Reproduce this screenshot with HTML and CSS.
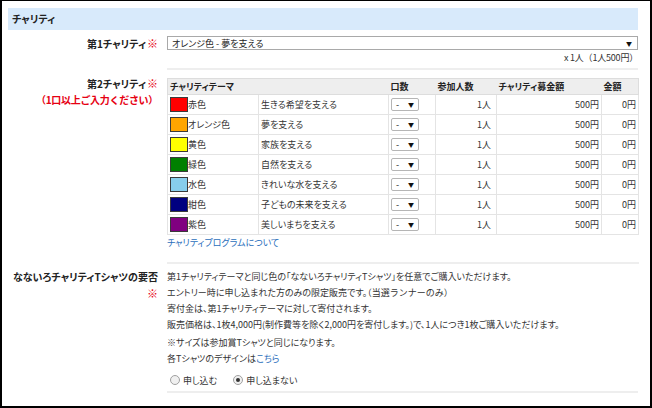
FILE: index.html
```html
<!DOCTYPE html>
<html lang="ja">
<head>
<meta charset="utf-8">
<title>チャリティ</title>
<link rel="stylesheet" href="styles.css">
</head>
<body>
<div class="frame">
  <div class="section-head">チャリティ</div>

  <div class="form-row">
    <div class="label">第1チャリティ<span class="req">※</span></div>
    <div class="field field-first">
      <div class="select select-wide"><span>オレンジ色 - 夢を支える</span><span class="arrow">▼</span></div>
      <div class="note-right">x 1人（1人500円）</div>
    </div>
  </div>

  <div class="form-row">
    <div class="label">第2チャリティ<span class="req">※</span><br><span class="warn">（1口以上ご入力ください）</span></div>
    <div class="field field-second">
      <table class="charity">
        <colgroup>
          <col class="c-name"><col class="c-theme"><col class="c-qty"><col class="c-people"><col class="c-fund"><col class="c-total">
        </colgroup>
        <thead>
          <tr><th colspan="2">チャリティテーマ</th><th>口数</th><th>参加人数</th><th>チャリティ募金額</th><th>金額</th></tr>
        </thead>
        <tbody>
          <tr><td><div class="color"><span class="swatch sw-red"></span>赤色</div></td><td>生きる希望を支える</td><td><div class="select select-mini"><span>-</span><span class="arrow">▼</span></div></td><td class="num num-people">1人</td><td class="num">500円</td><td class="num">0円</td></tr>
          <tr><td><div class="color"><span class="swatch sw-orange"></span>オレンジ色</div></td><td>夢を支える</td><td><div class="select select-mini"><span>-</span><span class="arrow">▼</span></div></td><td class="num num-people">1人</td><td class="num">500円</td><td class="num">0円</td></tr>
          <tr><td><div class="color"><span class="swatch sw-yellow"></span>黄色</div></td><td>家族を支える</td><td><div class="select select-mini"><span>-</span><span class="arrow">▼</span></div></td><td class="num num-people">1人</td><td class="num">500円</td><td class="num">0円</td></tr>
          <tr><td><div class="color"><span class="swatch sw-green"></span>緑色</div></td><td>自然を支える</td><td><div class="select select-mini"><span>-</span><span class="arrow">▼</span></div></td><td class="num num-people">1人</td><td class="num">500円</td><td class="num">0円</td></tr>
          <tr><td><div class="color"><span class="swatch sw-water"></span>水色</div></td><td>きれいな水を支える</td><td><div class="select select-mini"><span>-</span><span class="arrow">▼</span></div></td><td class="num num-people">1人</td><td class="num">500円</td><td class="num">0円</td></tr>
          <tr><td><div class="color"><span class="swatch sw-navy"></span>紺色</div></td><td>子どもの未来を支える</td><td><div class="select select-mini"><span>-</span><span class="arrow">▼</span></div></td><td class="num num-people">1人</td><td class="num">500円</td><td class="num">0円</td></tr>
          <tr><td><div class="color"><span class="swatch sw-purple"></span>紫色</div></td><td>美しいまちを支える</td><td><div class="select select-mini"><span>-</span><span class="arrow">▼</span></div></td><td class="num num-people">1人</td><td class="num">500円</td><td class="num">0円</td></tr>
        </tbody>
      </table>
      <a class="link" href="#">チャリティプログラムについて</a>
    </div>
  </div>

  <div class="form-row">
    <div class="label">なないろチャリティTシャツの要否<br><span class="req">※</span></div>
    <div class="field field-third">
      <p class="text">第1チャリティテーマと同じ色の「なないろチャリティTシャツ」を任意でご購入いただけます。<br>エントリー時に申し込まれた方のみの限定販売です。<span class="nopalt">（当選ランナーのみ）</span><br>寄付金は、第1チャリティテーマに対して寄付されます。<br>販売価格は、1枚4,000円(制作費等を除く2,000円を寄付します。)で、1人につき1枚ご購入いただけます。</p>
      <p class="text text-second">※サイズは参加賞Tシャツと同じになります。<br>各Tシャツのデザインは<a class="link-inline" href="#">こちら</a></p>
      <div class="radios">
        <label class="radio"><span class="radio-dot"></span>申し込む</label>
        <label class="radio"><span class="radio-dot checked"></span>申し込まない</label>
      </div>
    </div>
  </div>
</div>
</body>
</html>
```

FILE: styles.css
```css
html, body {
  margin: 0;
  padding: 0;
  background: #fff;
}

body {
  font-family: "Noto Sans CJK JP", "Noto Sans", sans-serif;
  font-feature-settings: "palt";
  color: #333;
  font-size: 9px;
}

.nopalt {
  font-feature-settings: normal;
}

.frame {
  width: 652px;
  height: 408px;
  box-sizing: border-box;
  border: 2px solid #000;
  border-top-width: 1px;
  padding: 7px 12px 0 6px;
  overflow: hidden;
}

.section-head {
  height: 22px;
  line-height: 22px;
  background: #d8eafb;
  padding-left: 4px;
  font-size: 10px;
  font-weight: bold;
  color: #222;
}

.form-row {
  display: grid;
  grid-template-columns: 150px 1fr;
  column-gap: 9px;
}

.label {
  text-align: right;
  font-size: 10px;
  font-weight: bold;
  color: #222;
  line-height: 16px;
  padding-top: 5px;
}

.req {
  color: #e60012;
  font-weight: bold;
  font-size: 11px;
  margin-left: 1px;
}

.warn {
  color: #e60012;
  font-feature-settings: normal;
  letter-spacing: -0.3px;
}

.field {
  border-bottom: 2px solid #eeeeee;
}

.field-first {
  padding: 6px 0 4px;
}

.field-second {
  padding: 8px 0 11px;
}

.field-third {
  padding: 5px 0 3px;
}

.select {
  display: flex;
  align-items: center;
  justify-content: space-between;
  box-sizing: border-box;
  background: #fff;
  border: 1px solid #a9a9a9;
  color: #222;
}

.select .arrow {
  font-size: 6px;
  color: #111;
}

.select-wide {
  height: 14px;
  padding: 0 5px 0 4px;
  font-size: 9px;
}

.select-mini {
  width: 28px;
  height: 13px;
  padding: 0 4px;
  border-radius: 2px;
  border-color: #b5b5b5;
}

.note-right {
  margin-top: 2px;
  text-align: right;
  line-height: 12px;
  font-size: 9px;
  font-feature-settings: normal;
  letter-spacing: -0.2px;
}

.charity {
  width: 100%;
  table-layout: fixed;
  border-collapse: collapse;
  border: 1px solid #dddddd;
  font-size: 9px;
}

.c-name { width: 91px; }
.c-theme { width: 130px; }
.c-qty { width: 47px; }
.c-people { width: 61px; }
.c-fund { width: 105px; }
.c-total { width: 37px; }

.charity th {
  background: #eeeeee;
  height: 15px;
  padding: 0 2px;
  text-align: left;
  font-weight: bold;
  color: #222;
  border-bottom: 1px solid #dddddd;
  white-space: nowrap;
}

.charity td {
  height: 19px;
  padding: 0 2px;
  border: 1px solid #e4e4e4;
  white-space: nowrap;
}

.charity td:first-child {
  border-right: none;
}

.color {
  display: flex;
  align-items: center;
}

.swatch {
  display: inline-block;
  width: 16px;
  height: 13px;
  border: 1px solid #3a3a3a;
}

.sw-red { background: #ff0000; }
.sw-orange { background: #ffa500; }
.sw-yellow { background: #ffff00; }
.sw-green { background: #008000; }
.sw-water { background: #87ceeb; }
.sw-navy { background: #000080; }
.sw-purple { background: #800080; }

.num {
  text-align: right;
}

.charity td.num-people {
  padding-right: 5px;
}

.link {
  display: block;
  line-height: 16px;
  color: #2a6ebb;
  text-decoration: none;
}

.text {
  margin: 0;
  line-height: 16px;
}

.text-second {
  margin-top: 2px;
}

.link-inline {
  color: #2a6ebb;
  text-decoration: none;
}

.radios {
  display: flex;
  align-items: center;
  gap: 16px;
  margin-top: 5px;
  height: 16px;
  padding-left: 3px;
}

.radio {
  display: flex;
  align-items: center;
  gap: 3px;
}

.radio-dot {
  display: inline-block;
  box-sizing: border-box;
  width: 10px;
  height: 10px;
  border-radius: 50%;
  border: 1px solid #a0a0a0;
  background: #f0f0f0;
  position: relative;
}

.radio-dot.checked::after {
  content: "";
  position: absolute;
  left: 2px;
  top: 2px;
  width: 4px;
  height: 4px;
  border-radius: 50%;
  background: #333;
}
```
